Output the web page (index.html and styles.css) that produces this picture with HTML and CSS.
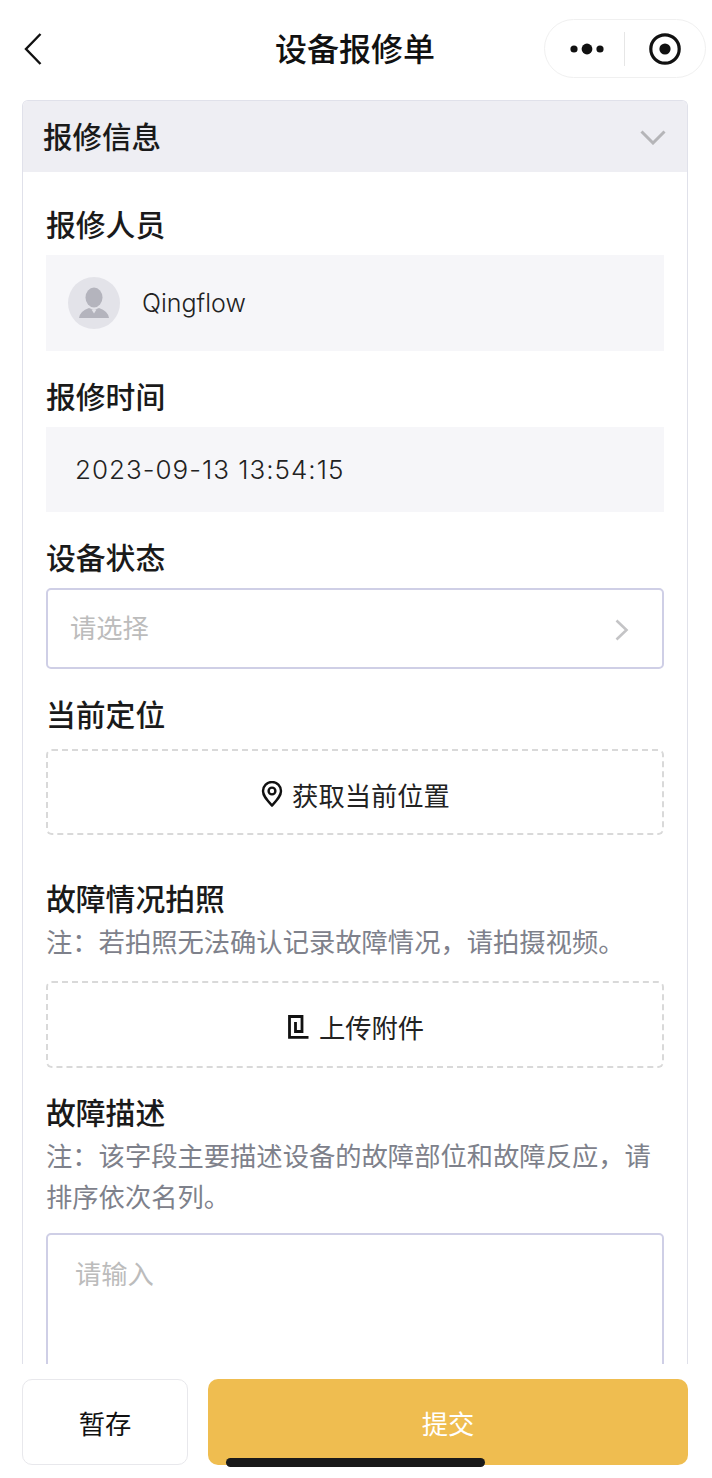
FILE: index.html
```html
<!DOCTYPE html>
<html lang="zh-CN">
<head>
    <meta charset="UTF-8">
    <meta name="viewport" content="width=device-width, initial-scale=1.0">
    <title>设备报修单</title>
    <link rel="stylesheet" href="styles.css">
</head>
<body>
    <!-- Navigation Bar -->
    <div class="navbar">
        <svg class="nav-back" width="20" height="34" viewBox="0 0 20 34">
            <path d="M17.5 2 L3 17 L17.5 32" fill="none" stroke="#111" stroke-width="2.4"/>
        </svg>
        <div class="nav-title">设备报修单</div>
        <div class="capsule">
            <svg width="36" height="14" viewBox="0 0 36 14">
                <circle cx="5" cy="7" r="3.6" fill="#111"/>
                <circle cx="18" cy="7" r="5.4" fill="#111"/>
                <circle cx="31" cy="7" r="3.6" fill="#111"/>
            </svg>
            <span class="capsule-line"></span>
            <svg width="34" height="34" viewBox="0 0 34 34">
                <circle cx="17" cy="17" r="14.2" fill="none" stroke="#111" stroke-width="3.2"/>
                <circle cx="17" cy="17" r="5.6" fill="#111"/>
            </svg>
        </div>
    </div>

    <!-- Form Card -->
    <div class="content">
        <div class="card">
            <div class="card-header">
                <span class="card-title">报修信息</span>
                <svg class="card-arrow" width="26" height="15" viewBox="0 0 26 15">
                    <path d="M1.5 1.5 L13 13 L24.5 1.5" fill="none" stroke="#b5b5b8" stroke-width="3"/>
                </svg>
            </div>

            <div class="card-body">
                <div class="field">
                    <div class="label">报修人员</div>
                    <div class="readonly user-box">
                        <div class="avatar">
                            <svg width="52" height="52" viewBox="0 0 52 52">
                                <ellipse cx="26" cy="20.5" rx="8.5" ry="10" fill="#b4b4bd"/>
                                <path d="M11 41 Q12 34 21 31 L26 33 L31 31 Q40 34 41 41 Z" fill="#b4b4bd"/>
                                <path d="M23.5 32.5 H28.5 L26 36.5 Z" fill="#e3e3e9"/>
                            </svg>
                        </div>
                        <span>Qingflow</span>
                    </div>
                </div>

                <div class="field">
                    <div class="label">报修时间</div>
                    <div class="readonly time-box">2023-09-13 13:54:15</div>
                </div>

                <div class="field">
                    <div class="label">设备状态</div>
                    <div class="select-box">
                        <span class="placeholder">请选择</span>
                        <svg class="select-arrow" width="16" height="24" viewBox="0 0 16 24">
                            <path d="M2.5 2.5 L12.5 12 L2.5 21.5" fill="none" stroke="#c4c4c6" stroke-width="2.6"/>
                        </svg>
                    </div>
                </div>

                <div class="field field-location">
                    <div class="label">当前定位</div>
                    <div class="dashed-box location-box">
                        <svg width="22" height="26" viewBox="0 0 22 26">
                            <path d="M11 24.5 C6 19 2 15 2 10 A9 9 0 0 1 20 10 C20 15 16 19 11 24.5 Z" fill="none" stroke="#111" stroke-width="2.4"/>
                            <circle cx="11" cy="10" r="3.4" fill="none" stroke="#111" stroke-width="2.4"/>
                        </svg>
                        <span>获取当前位置</span>
                    </div>
                </div>

                <div class="field field-photo">
                    <div class="label">故障情况拍照</div>
                    <div class="hint">注：若拍照无法确认记录故障情况，请拍摄视频。</div>
                    <div class="dashed-box upload-box">
                        <svg class="upload-icon" width="22" height="24" viewBox="0 0 22 24">
                            <path d="M20.5 22.4 H1.5 V1.5 H14 V16.5 H7.5 V7" fill="none" stroke="#111" stroke-width="2.8"/>
                        </svg>
                        <span>上传附件</span>
                    </div>
                </div>

                <div class="field">
                    <div class="label">故障描述</div>
                    <div class="hint">注：该字段主要描述设备的故障部位和故障反应，请排序依次名列。</div>
                    <div class="textarea-box">请输入</div>
                </div>
            </div>
        </div>
    </div>

    <!-- Bottom Buttons -->
    <div class="footer">
        <div class="btn btn-save">暂存</div>
        <div class="btn btn-submit">提交</div>
    </div>
    <div class="home-bar"></div>
</body>
</html>
```

FILE: styles.css
```css
/* General Styling */
html, body {
    height: 1478px;
    overflow: hidden;
}

body {
    position: relative;
    margin: 0;
    padding: 0;
    background: #fff;
    color: #1a1a1a;
    font-family: 'Noto Sans CJK SC', 'Noto Sans', sans-serif;
}

/* Navigation Bar */
.navbar {
    position: relative;
    height: 100px;
}

.nav-back {
    position: absolute;
    left: 23px;
    top: 32px;
}

.nav-title {
    padding: 24px 2px 0 0;
    text-align: center;
    font-size: 32px;
    line-height: 46px;
    font-weight: 500;
    color: #111;
}

.capsule {
    position: absolute;
    left: 544px;
    top: 19px;
    width: 162px;
    height: 59px;
    box-sizing: border-box;
    border: 1px solid #f0f0f0;
    border-radius: 30px;
    display: flex;
    align-items: center;
    padding-left: 24px;
}

.capsule-line {
    width: 1px;
    height: 34px;
    background: #e6e6e6;
    margin: 0 23px 0 19px;
}

/* Form Card */
.content {
    height: 1264px;
    overflow: hidden;
    padding: 0 24px 0 22px;
}

.card {
    box-sizing: border-box;
    width: 666px;
    border: 1px solid #e0e1ea;
    border-bottom: none;
    border-radius: 6px 6px 0 0;
}

.card-header {
    height: 71px;
    background: #eeeef3;
    display: flex;
    align-items: center;
    justify-content: space-between;
    padding: 0 21px 0 20px;
    font-size: 29.5px;
    font-weight: 500;
    border-radius: 5px 5px 0 0;
}

.card-title {
    margin-bottom: 4px;
}

.card-arrow {
    margin-top: 2px;
}

.card-body {
    padding: 33px 23px 0 23px;
}

.field {
    margin-bottom: 26px;
}

.field-location {
    margin-bottom: 44px;
}

.field-photo {
    margin-bottom: 25px;
}

.label {
    font-size: 29.8px;
    line-height: 37px;
    font-weight: 500;
    margin-bottom: 13px;
}

.field-location .label {
    margin-bottom: 17px;
}

.field-photo .label,
.field:last-child .label {
    margin-bottom: 4px;
}

.hint {
    font-size: 26.3px;
    line-height: 41.5px;
    color: #7e818b;
    margin-bottom: 19px;
}

.field:last-child .hint {
    margin-bottom: 16px;
}

.readonly {
    background: #f6f6f9;
}

.user-box {
    height: 96px;
    display: flex;
    align-items: center;
    padding-left: 22px;
    font-family: 'Inter', 'Noto Sans', sans-serif;
    font-size: 25px;
    font-weight: 300;
    color: #222;
}

.avatar {
    width: 52px;
    height: 52px;
    border-radius: 50%;
    background: #e3e3e9;
    margin-right: 22px;
}

.time-box {
    height: 85px;
    line-height: 85px;
    padding-left: 29px;
    font-family: 'Inter', 'Noto Sans', sans-serif;
    font-size: 26px;
    font-weight: 300;
    letter-spacing: 1px;
    color: #222;
}

.select-box {
    box-sizing: border-box;
    height: 81px;
    border: 2px solid #cfcfe6;
    border-radius: 5px;
    display: flex;
    align-items: center;
    justify-content: space-between;
    padding: 0 32px 0 22px;
}

.placeholder {
    font-size: 26.3px;
    color: #bcbcbc;
    margin-bottom: 4px;
}

.select-arrow {
    margin-top: 2px;
}

.dashed-box {
    box-sizing: border-box;
    border: 2px dashed #d9d9d9;
    border-radius: 6px;
    display: flex;
    align-items: center;
    justify-content: center;
    font-size: 26.3px;
    color: #222;
}

.location-box {
    height: 86px;
    gap: 9px;
    padding: 4px 0 0 1px;
}

.upload-box {
    height: 87px;
    gap: 9px;
    padding: 5px 0 0 0;
}

.upload-icon {
    margin-left: 2px;
}

.textarea-box {
    box-sizing: border-box;
    height: 260px;
    border: 2px solid #cfcfe6;
    border-radius: 5px;
    padding: 18px 27px;
    font-size: 26.3px;
    line-height: 40px;
    color: #bcbcbc;
}

/* Bottom Buttons */
.footer {
    display: flex;
    gap: 20px;
    padding: 15px 24px 0 22px;
}

.btn {
    box-sizing: border-box;
    height: 86px;
    border-radius: 10px;
    display: flex;
    align-items: center;
    justify-content: center;
    font-size: 26.3px;
}

.btn-save {
    width: 166px;
    border: 1px solid #e8e8ec;
    color: #111;
}

.btn-submit {
    width: 480px;
    background: #efbd50;
    color: #fff;
}

.home-bar {
    position: absolute;
    left: 226px;
    top: 1458px;
    width: 259px;
    height: 9px;
    border-radius: 5px;
    background: #1a1a1a;
}
```
